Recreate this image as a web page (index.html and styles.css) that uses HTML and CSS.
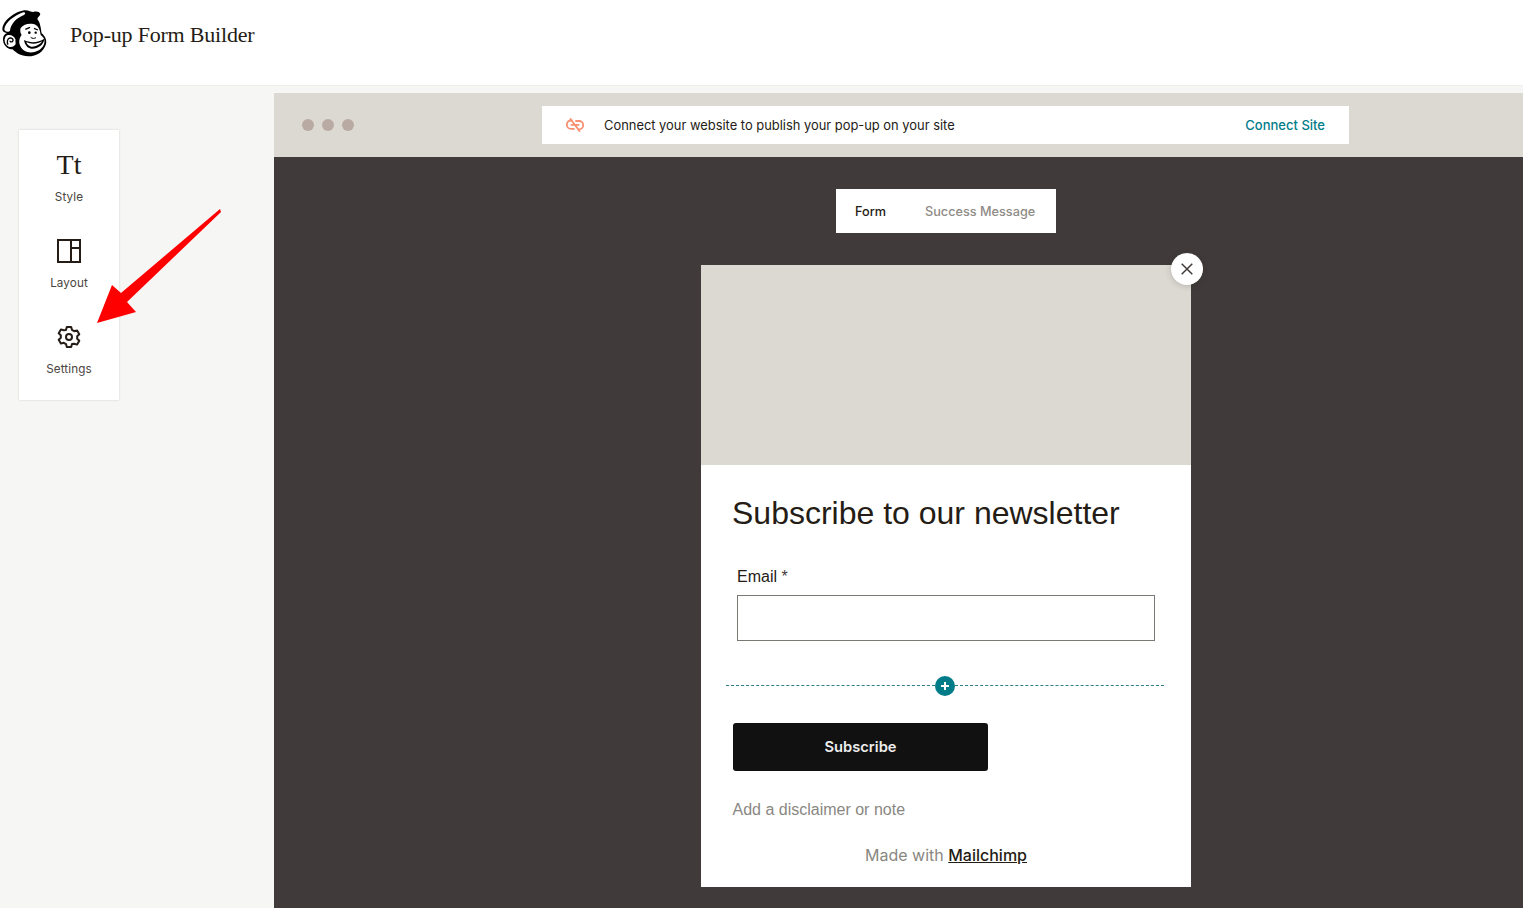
FILE: index.html
```html
<!DOCTYPE html>
<html lang="en">
<head>
<meta charset="utf-8">
<title>Pop-up Form Builder</title>
<link rel="stylesheet" href="styles.css">
</head>
<body>
<div class="app">
  <header class="topbar">
    <svg class="logo" viewBox="3 27 144 150" width="48" height="50" aria-hidden="true">
      <path d="M7 88C9 60 45 36 72 31 85 29 92 36 100 36 108 33 119 35 121 42 119 50 112 52 112 57 122 70 122 85 125 100 135 108 141 120 138 132 131 156 110 169 85 169 62 169 46 157 38 148 20 148 8 132 9 116 10 107 15 101 21 100 12 98 7 94 7 88Z" fill="#000"/>
      <path d="M13 88C14 68 44 46 70 37 76 36 78 41 72 45 50 53 32 72 30 92 24 98 14 96 13 88Z" fill="#fff"/>
      <path d="M21 106C31 102 43 108 46 118L47 132C43 140 34 143 26 140 17 136 13 127 14 118 15 112 17 108 21 106Z" fill="#fff"/>
      <path d="M24 134C20 126 22 115 30 114 38 113 42 121 37 125 33 127 30 125 30 122" fill="none" stroke="#000" stroke-width="4"/>
      <path d="M62 84C70 72 88 69 100 72 115 75 120 90 122 105 132 112 137 122 131 135 123 152 100 161 82 156 66 151 56 137 58 121 60 112 62 108 65 105 60 98 60 90 62 84Z" fill="#fff"/>
      <path d="M72 120C92 130 115 128 133 116 132 134 112 148 94 146 82 145 74 133 72 120Z" fill="#000"/>
      <path d="M79 126C94 134 113 132 126 124 120 134 106 141 94 140 86 139 81 133 79 126Z" fill="#fff"/>
      <path d="M76 88L90 82M102 85L114 90" stroke="#000" stroke-width="4" fill="none"/>
      <circle cx="88" cy="98" r="4" fill="#000"/>
      <circle cx="107" cy="98" r="3.500" fill="#000"/>
      <path d="M92 112C97 116 102 116 108 113" stroke="#000" stroke-width="3" fill="none"/>
    </svg>
    <h1 class="app-title">Pop-up Form Builder</h1>
  </header>
  <div class="workspace">
    <aside class="sidebar">
      <nav class="tools">
        <a class="tool">
          <span class="tool-icon tt">Tt</span>
          <span class="tool-label">Style</span>
        </a>
        <a class="tool">
          <svg class="tool-icon" viewBox="0 0 24 24" width="24" height="24" aria-hidden="true">
            <path d="M1 1h22v22H1zM14 1v22M14 9h9" fill="none" stroke="#241c15" stroke-width="2"/>
          </svg>
          <span class="tool-label">Layout</span>
        </a>
        <a class="tool">
          <svg class="tool-icon" viewBox="0 0 24 24" width="24" height="24" aria-hidden="true">
            <path d="M9.800 2h4.400l.8 2.900 2.200 1.300 2.900-.8 2.200 3.800-2.100 2.100v2.400l2.100 2.100-2.200 3.800-2.900-.8L15 19.100l-.8 2.900H9.800L9 19.100l-2.200-1.300-2.900.8-2.200-3.800 2.100-2.100v-2.400L1.700 8.200l2.200-3.800 2.900.8L9 4.900z" fill="none" stroke="#241c15" stroke-width="2" stroke-linejoin="round"/>
            <circle cx="12" cy="12" r="3" fill="none" stroke="#241c15" stroke-width="2"/>
          </svg>
          <span class="tool-label">Settings</span>
        </a>
      </nav>
    </aside>
    <main class="canvas">
      <div class="canvas-bar">
        <div class="dots"><i></i><i></i><i></i></div>
        <div class="connect">
          <svg class="link-icon" viewBox="0 0 18 14" width="18" height="14" aria-hidden="true">
            <path d="M6 2.500H5a4.200 4.200 0 0 0 0 8.400h3M10 3h3a4.200 4.200 0 0 1 0 8.400h-1M5.500 6.900h7M4.500 1l9 12" fill="none" stroke="#f88f70" stroke-width="1.800" stroke-linecap="round"/>
          </svg>
          <span class="connect-text">Connect your website to publish your pop-up on your site</span>
          <a class="connect-link">Connect Site</a>
        </div>
      </div>
      <div class="stage">
        <div class="tabs">
          <span class="tab active">Form</span>
          <span class="tab">Success Message</span>
        </div>
        <section class="popup">
          <button class="close" aria-label="Close">
            <svg viewBox="0 0 12 12" width="12" height="12" aria-hidden="true"><path d="M.7.7l10.600 10.600M11.300.7L.7 11.300" stroke="#403b3a" stroke-width="1.500" fill="none"/></svg>
          </button>
          <div class="popup-image"></div>
          <div class="popup-body">
            <h2 class="popup-title">Subscribe to our newsletter</h2>
            <label class="field-label">Email <span class="req">*</span></label>
            <div class="field-input"></div>
            <div class="divider">
              <span class="dash"></span>
              <span class="plus"><svg viewBox="0 0 10 10" width="10" height="10" aria-hidden="true"><path d="M5 1v8M1 5h8" stroke="#fff" stroke-width="2"/></svg></span>
              <span class="dash"></span>
            </div>
            <div class="subscribe">Subscribe</div>
            <p class="disclaimer">Add a disclaimer or note</p>
            <p class="made">Made with <a class="made-link">Mailchimp</a></p>
          </div>
        </section>
      </div>
    </main>
  </div>
  <svg class="arrow" viewBox="0 0 130 120" width="130" height="120" aria-hidden="true">
    <path d="M1 114L16 76 25 84 124 0 125 3 31 93 40 103Z" fill="#fe0000"/>
  </svg>
</div>
</body>
</html>
```
FILE: styles.css
```css
* { box-sizing: border-box; }
html, body { margin: 0; height: 100%; }
body { background: #f6f6f4; font-family: Inter, "Liberation Sans", sans-serif; color: #241c15; overflow: hidden; }
.app { position: relative; height: 908px; display: flex; flex-direction: column; }

.topbar { height: 86px; flex: none; display: flex; align-items: flex-start; background: #fff; border-bottom: 1px solid #eeeeec; padding: 9px 0 0 1px; }
.logo { flex: none; }
.app-title { margin: 13px 0 0 21px; font: 400 22px/26px "Liberation Serif", serif; color: #241c15; letter-spacing: -.2px; }

.workspace { flex: 1; display: flex; min-height: 0; }
.sidebar { width: 274px; flex: none; padding: 44px 0 0 19px; }
.tools { width: 100px; height: 270px; background: #fff; box-shadow: 0 0 2px rgba(36,28,21,.18); display: flex; flex-direction: column; gap: 35px; padding-top: 23px; }
.tool { display: flex; flex-direction: column; align-items: center; flex: none; }
.tool-icon { display: block; height: 24px; flex: none; }
.tt { font: 400 28px/24px "Liberation Serif", serif; color: #241c15; }
.tool-label { margin-top: 13px; font-size: 11.700px; line-height: 14px; color: #4a4540; letter-spacing: .1px; }

.canvas { flex: 1; margin-top: 7px; display: flex; flex-direction: column; min-width: 0; }
.canvas-bar { height: 64px; flex: none; background: #dcd9d3; display: flex; align-items: center; padding-left: 28px; }
.dots { display: flex; gap: 8px; width: 240px; }
.dots i { width: 12px; height: 12px; border-radius: 50%; background: #b9aaa3; }
.connect { width: 807px; height: 38px; background: #fff; display: flex; align-items: center; padding: 0 24px; font-size: 12.900px; }
.link-icon { flex: none; }
.connect-text { margin-left: 20px; color: #241c15; }
.connect-link { margin-left: auto; color: #007c89; font-weight: 500; font-size: 13px; }

.stage { flex: 1; background: #403b3a; padding: 32px 0 0 95px; display: flex; flex-direction: column; align-items: center; min-height: 0; }
.tabs { width: 220px; height: 44px; flex: none; background: #fff; display: flex; align-items: center; gap: 39px; padding-left: 19px; font-size: 12.700px; font-weight: 500; }
.tab { color: #8f8b86; }
.tab.active { color: #241c15; }

.popup { position: relative; width: 490px; margin-top: 32px; background: #fff; flex: none; }
.popup-image { height: 200px; background: #dcd9d3; }
.close { position: absolute; top: -12px; right: -12px; width: 32px; height: 32px; padding: 0; border: 0; border-radius: 50%; background: #fff; display: flex; align-items: center; justify-content: center; box-shadow: 0 1px 6px rgba(36,28,21,.2); }

.popup-body { height: 422px; padding: 28px 32px 0; display: flex; flex-direction: column; font-family: "Liberation Sans", Arial, sans-serif; }
.popup-title { margin: 0 0 0 -1px; font-size: 32px; line-height: 40px; font-weight: 400; color: #241c15; height: 40px; white-space: nowrap; }
.field-label { margin: 34px 0 0 4px; font-size: 16px; line-height: 20px; color: #241c15; }
.req { color: #403b3a; }
.field-input { margin: 8px 0 0 4px; width: 418px; height: 46px; border: 1px solid #7c7873; background: #fff; }
.divider { margin: 35px -5px 0 -7px; height: 20px; display: flex; align-items: center; }
.dash { flex: 1; border-top: 1px dashed #2e7f88; margin-top: -1px; }
.plus { width: 20px; height: 20px; border-radius: 50%; background: #007c89; display: flex; align-items: center; justify-content: center; flex: none; }
.subscribe { margin-top: 27px; width: 255px; height: 48px; background: #111; border-radius: 3px; color: #eeeeee; display: flex; align-items: center; justify-content: center; font: 600 14.700px/20px Inter, sans-serif; }
.disclaimer { margin: 29px 0 0 -.5px; font-size: 16px; line-height: 20px; color: #8a8782; }
.made { margin: 25px 0 0; text-align: center; font: 400 16px/20px Inter, sans-serif; color: #8a8782; }
.made-link { color: #241c15; text-decoration: underline; font-weight: 500; }

.arrow { position: absolute; left: 96px; top: 209px; }
```
